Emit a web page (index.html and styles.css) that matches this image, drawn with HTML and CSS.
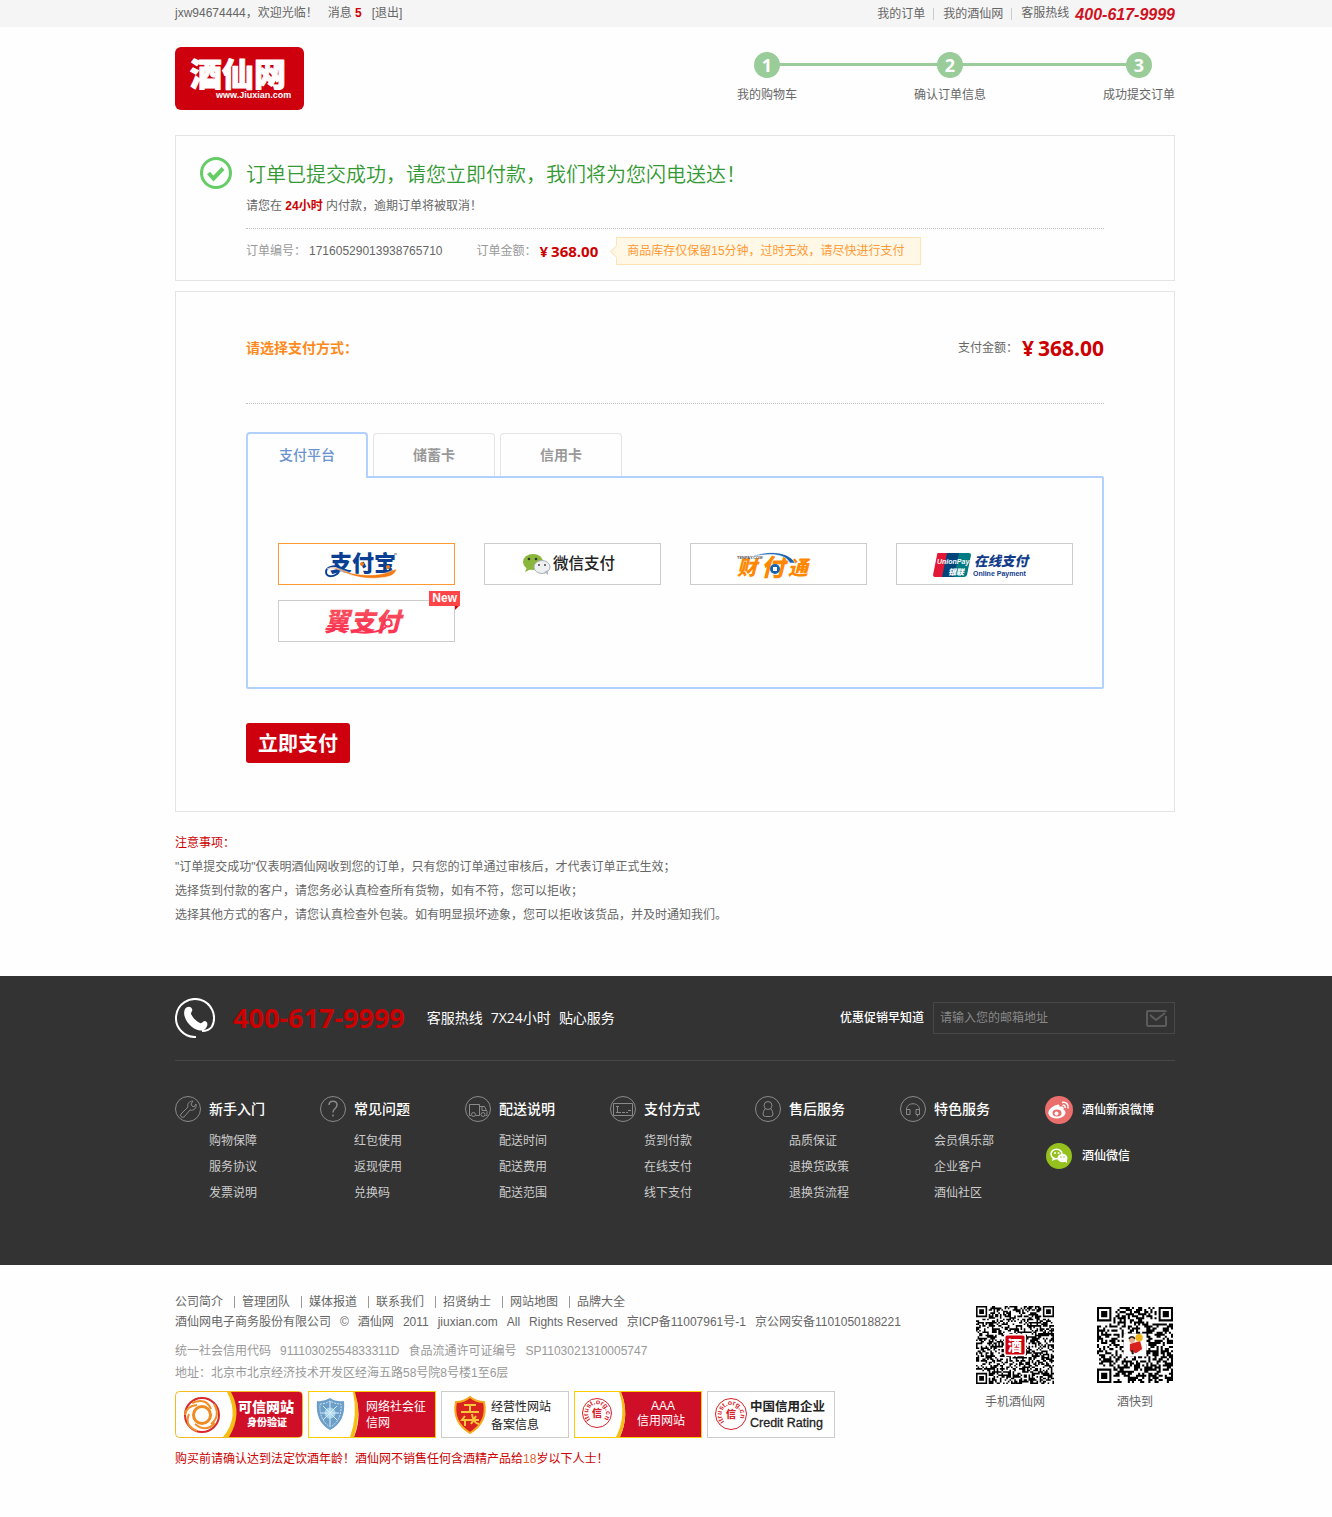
FILE: index.html
```html
<!DOCTYPE html>
<html lang="zh-CN">
<head>
<meta charset="utf-8">
<meta name="viewport" content="width=device-width, initial-scale=1">
<title>酒仙网 - 订单支付</title>
<link rel="stylesheet" href="styles.css">
</head>
<body>
<div class="band topbar">
  <div class="wrap topbar-row">
    <div class="topbar-user">
      <span>jxw94674444，欢迎光临！</span>
      <a href="#">消息 <b class="red">5</b></a>
      <a href="#">[退出]</a>
    </div>
    <nav class="topbar-nav">
      <a href="#">我的订单</a>
      <a href="#">我的酒仙网</a>
      <span>客服热线 <strong class="hotline">400-617-9999</strong></span>
    </nav>
  </div>
</div>

<header class="band">
  <div class="wrap header-row">
    <a href="#" class="logo" aria-label="酒仙网">
      <svg width="129" height="63" viewBox="0 0 129 63">
        <rect width="129" height="63" rx="6" fill="#cf000e"/>
        <g fill="#fff" stroke="#fff" stroke-linejoin="round">
          <text x="15" y="39" class="cjk-logo" font-size="32" stroke-width="1">酒仙网</text>
          <text x="41" y="51" class="latin-logo" font-size="9" stroke="none">www.Jiuxian.com</text>
        </g>
      </svg>
    </a>
    <ol class="steps">
      <li><b>1</b><span>我的购物车</span></li>
      <li><b>2</b><span>确认订单信息</span></li>
      <li><b>3</b><span>成功提交订单</span></li>
    </ol>
  </div>
</header>

<main class="band">
  <div class="wrap">
    <section class="box result">
      <svg width="32" height="32" viewBox="0 0 32 32" fill="none" stroke="#66cc66">
        <circle cx="16" cy="16" r="14.5" stroke-width="3"/>
        <path d="M8.500 16l5 5.500 9.500-10" stroke-width="4"/>
      </svg>
      <div class="result-body">
        <h1>订单已提交成功，请您立即付款，我们将为您闪电送达！</h1>
        <p class="deadline">请您在 <b class="red">24小时</b> 内付款，逾期订单将被取消！</p>
        <div class="order">
          <span class="order-no">订单编号： <em>17160529013938765710</em></span>
          <span>订单金额： <strong class="price"><i>¥</i>368.00</strong></span>
          <span class="tip">商品库存仅保留15分钟，过时无效，请尽快进行支付</span>
        </div>
      </div>
    </section>

    <form class="box pay">
      <div class="pay-head">
        <h2>请选择支付方式：</h2>
        <p>支付金额： <strong class="price price-big"><i>¥</i>368.00</strong></p>
      </div>
      <div class="tabs" role="tablist">
        <button type="button" role="tab" class="tab active" aria-selected="true">支付平台</button>
        <button type="button" role="tab" class="tab" aria-selected="false">储蓄卡</button>
        <button type="button" role="tab" class="tab" aria-selected="false">信用卡</button>
      </div>
      <div class="panel" role="tabpanel">
        <label class="option">
          <input type="radio" name="pay" aria-label="支付宝" checked>
          <svg width="175" height="40" viewBox="0 0 175 40">
            <text x="51" y="27" class="cjk-logo" font-size="22" fill="#0a3f93">支付宝</text>
            <path d="M60 23c-5-2-13 0-13 5 0 6 9 5 13 0" fill="none" stroke="#0a3f93" stroke-width="2"/>
            <path d="M48 25c8-5 16 3 29 5 14 2 28 1 37-4l4-1c-3 7-8 8-18 9-13 1-24-1-33-5-8-4-14-6-19-4z" fill="#f47b13" stroke="#fff" stroke-width=".5"/>
            <circle cx="83" cy="20" r="2" fill="#f47b13"/><circle cx="109" cy="23" r="2" fill="#f47b13"/>
            <path d="M115 10h3" stroke="#667"/>
          </svg>
        </label>
        <label class="option">
          <input type="radio" name="pay" aria-label="微信支付">
          <svg width="175" height="40" viewBox="0 0 175 40">
            <ellipse cx="48" cy="18" rx="10" ry="8" fill="#8bb63c"/><path d="M42 23l-2 5 6-3z" fill="#8bb63c"/>
            <circle cx="44" cy="15" r="1.300" fill="#333"/><circle cx="51" cy="15" r="1.300" fill="#333"/>
            <ellipse cx="57" cy="23" rx="8" ry="6.500" fill="#eef0f2" stroke="#a9b0b5"/><path d="M59 28l4 3v-5z" fill="#b6bdc2"/>
            <circle cx="54" cy="21" r="1" fill="#444"/><circle cx="60" cy="21" r="1" fill="#444"/>
            <text x="68" y="25" class="cjk" font-size="15.500" font-weight="500" fill="#222">微信支付</text>
          </svg>
        </label>
        <label class="option">
          <input type="radio" name="pay" aria-label="财付通">
          <svg width="175" height="40" viewBox="0 0 175 40">
            <text x="46" y="31" class="cjk-logo slant" font-size="20" fill="#f80">财</text>
            <text x="70" y="32" class="cjk-logo slant" font-size="24" fill="#f80">付</text>
            <text x="97" y="31" class="cjk-logo slant" font-size="20" fill="#f80">通</text>
            <path d="M60 13C76 6 98 7 104 19l-5 0C94 9 77 9 60 13z" fill="#1763b0" stroke="#fff" stroke-width=".5"/>
            <circle cx="84" cy="25" r="5" fill="#1763b0"/><rect x="82" y="23" width="4" height="4" fill="#fff"/>
            <text x="46" y="15" class="latin-logo" font-size="4" fill="#555">TENPAY.COM</text>
          </svg>
        </label>
        <label class="option">
          <input type="radio" name="pay" aria-label="银联在线支付">
          <svg width="175" height="40" viewBox="0 0 175 40">
            <path d="M41 9h11l-5 24H38q-2 0-2-2l4-20q0-2 1-2z" fill="#e21836"/>
            <path d="M50 9h13l-5 24H45z" fill="#00447c"/>
            <path d="M62 9h10q2 0 2 2l-4 20q-1 2-3 2H57z" fill="#007b84"/>
            <text x="40" y="20" class="latin-logo slant" font-size="7" fill="#fff">UnionPay</text>
            <text x="51" y="31" class="cjk-logo slant" font-size="8" fill="#fff">银联</text>
            <text x="77" y="22" class="cjk-logo slant" font-size="13.500" fill="#123c88">在线支付</text>
            <text x="76" y="32" class="latin-logo" font-size="7" fill="#123c88">Online Payment</text>
          </svg>
        </label>
        <label class="option">
          <input type="radio" name="pay" aria-label="翼支付">
          <svg width="175" height="40" viewBox="0 0 175 40">
            <defs><linearGradient id="wing" x2="0" y2="1"><stop stop-color="#f75a5f"/><stop offset="1" stop-color="#fc2c50"/></linearGradient></defs>
            <text x="45" y="30" class="cjk-logo slant" font-size="25.500" fill="url(#wing)">翼支付</text>
            <path d="M74 30c10 3 26 2 33-4" fill="none" stroke="#fc3453" stroke-width="2"/>
            <circle cx="109" cy="22" r="3.500" fill="#fff" stroke="#fc3453" stroke-width="2"/>
          </svg>
          <span class="new">New</span>
        </label>
      </div>
      <button type="submit" class="submit">立即支付</button>
    </form>

    <section class="notes">
      <h3>注意事项：</h3>
      <p>"订单提交成功"仅表明酒仙网收到您的订单，只有您的订单通过审核后，才代表订单正式生效；</p>
      <p>选择货到付款的客户，请您务必认真检查所有货物，如有不符，您可以拒收；</p>
      <p>选择其他方式的客户，请您认真检查外包装。如有明显损坏迹象，您可以拒收该货品，并及时通知我们。</p>
    </section>
  </div>
</main>

<footer>
  <div class="band dark">
    <div class="wrap">
      <div class="service">
        <svg width="40" height="40" viewBox="0 0 40 40">
          <path d="M21 39A19 19 0 1 1 37 28.500Q34 33 27 33" fill="none" stroke="#fff" stroke-width="2"/>
          <path d="M10 11c2-3 6-3 7 0 1 2-1 3-1 5 2 4 5 7 9 9 2 1 3-2 5-2 3 1 3 4 1 7-3 4-9 3-14-1-5-4-10-12-7-18z" fill="#fff"/>
        </svg>
        <strong class="service-phone">400-617-9999</strong>
        <p class="service-text"><span>客服热线</span><span>7X24小时</span><span>贴心服务</span></p>
        <label class="mail-label" for="mail">优惠促销早知道</label>
        <div class="mail-box">
          <input id="mail" type="email" placeholder="请输入您的邮箱地址">
          <button type="button" aria-label="订阅">
            <svg width="21" height="17" viewBox="0 0 21 17" fill="none" stroke="#5c5c5c" stroke-width="2"><path d="M20 6v9q0 1-1 1H2q-1 0-1-1V2q0-1 1-1h17q1 0 1 1"/><path d="M4 5l6 5 9-7"/></svg>
          </button>
        </div>
      </div>
      <div class="guide">
        <section>
          <svg width="26" height="26" viewBox="0 0 26 26" class="line-icon"><circle cx="13" cy="13" r="12.500"/><path d="M6 18l7-7c-1-3 1-6 5-6l-2 3 1 2 2 1 2-3c1 4-2 7-6 6l-6 7q-2 1-3-0.500t0-2.500z"/></svg>
          <h4>新手入门</h4>
          <ul><li><a href="#">购物保障</a></li><li><a href="#">服务协议</a></li><li><a href="#">发票说明</a></li></ul>
        </section>
        <section>
          <svg width="26" height="26" viewBox="0 0 26 26" class="line-icon"><circle cx="13" cy="13" r="12.500"/><path d="M9 9c0-5 8-5 8 0 0 4-4 3-4 7.500M13 18.500v2" stroke-width="1.500"/></svg>
          <h4>常见问题</h4>
          <ul><li><a href="#">红包使用</a></li><li><a href="#">返现使用</a></li><li><a href="#">兑换码</a></li></ul>
        </section>
        <section>
          <svg width="26" height="26" viewBox="0 0 26 26" class="line-icon"><circle cx="13" cy="13" r="12.500"/><path d="M6 19.500H4.500v-11h10v11h-4M14.500 10.500h5l2.500 5v4h-1.500M17 10.500v4h4"/><circle cx="8.500" cy="18.500" r="2"/><circle cx="18" cy="18.500" r="2"/></svg>
          <h4>配送说明</h4>
          <ul><li><a href="#">配送时间</a></li><li><a href="#">配送费用</a></li><li><a href="#">配送范围</a></li></ul>
        </section>
        <section>
          <svg width="26" height="26" viewBox="0 0 26 26" class="line-icon"><circle cx="13" cy="13" r="12.500"/><path d="M3.500 7.500h19v12h-19zM6 10.500h3M7.500 10v6M6 16.500h5M12 16.500h3M16 16.500h2M18 14.500h3"/></svg>
          <h4>支付方式</h4>
          <ul><li><a href="#">货到付款</a></li><li><a href="#">在线支付</a></li><li><a href="#">线下支付</a></li></ul>
        </section>
        <section>
          <svg width="26" height="26" viewBox="0 0 26 26" class="line-icon"><circle cx="13" cy="13" r="12.500"/><circle cx="13" cy="9.500" r="4"/><path d="M10 13q-2 2-2 5 0 2.500 2.500 2.500h5q2.500 0 2.500-2.500 0-3-2-5"/></svg>
          <h4>售后服务</h4>
          <ul><li><a href="#">品质保证</a></li><li><a href="#">退换货政策</a></li><li><a href="#">退换货流程</a></li></ul>
        </section>
        <section>
          <svg width="26" height="26" viewBox="0 0 26 26" class="line-icon"><circle cx="13" cy="13" r="12.500"/><path d="M6.500 14.500c-1-9 14-9 13 0M6.500 13.500h3.500v5H6.500zM16 13.500h3.500v5H16zM17.500 18.500v2"/></svg>
          <h4>特色服务</h4>
          <ul><li><a href="#">会员俱乐部</a></li><li><a href="#">企业客户</a></li><li><a href="#">酒仙社区</a></li></ul>
        </section>
        <div class="social">
          <a href="#">
            <svg width="28" height="28" viewBox="0 0 28 28"><circle cx="14" cy="14" r="14" fill="#ea6f6c"/><path d="M12 9c2-1 3 0 2.500 2 3-1 5 0 4 2.500 5 3 0 9-7 9S1 17 5 13c2-2 5-4 7-4z" fill="#fff"/><ellipse cx="12" cy="17" rx="4.500" ry="3.500" fill="#ea6f6c"/><circle cx="11.500" cy="17.500" r="2" fill="#fff"/><path d="M17 6.500c4-1 7 2 6 6M17.500 9.500c2-.5 3 .5 2.500 2.500" fill="none" stroke="#fff" stroke-width="1.500"/></svg>
            <span>酒仙新浪微博</span>
          </a>
          <a href="#">
            <svg width="28" height="28" viewBox="0 0 28 28"><circle cx="14" cy="14" r="13" fill="#95c11f"/><ellipse cx="11.500" cy="12" rx="5.500" ry="4.700" fill="none" stroke="#fff" stroke-width="1.500"/><path d="M8 15l-1 4 4-2z" fill="#fff"/><circle cx="10" cy="11" r="1" fill="#fff"/><circle cx="13.500" cy="11" r="1" fill="#fff"/><ellipse cx="17.500" cy="16" rx="5" ry="4.300" fill="#fff"/><path d="M19 19l3 2v-4z" fill="#fff"/><circle cx="16" cy="15" r=".7" fill="#95c11f"/><circle cx="19" cy="15" r=".7" fill="#95c11f"/></svg>
            <span>酒仙微信</span>
          </a>
        </div>
      </div>
    </div>
  </div>

  <div class="band">
    <div class="wrap legal">
      <div class="legal-main">
        <nav class="legal-nav">
          <a href="#">公司简介</a><a href="#">管理团队</a><a href="#">媒体报道</a><a href="#">联系我们</a><a href="#">招贤纳士</a><a href="#">网站地图</a><a href="#">品牌大全</a>
        </nav>
        <p class="copyright"><span>酒仙网电子商务股份有限公司</span><span>©</span><span>酒仙网</span><span>2011</span><span>jiuxian.com</span><span>All</span><span>Rights Reserved</span><span>京ICP备11007961号-1</span><span>京公网安备1101050188221</span></p>
        <div class="license">
          <p><span>统一社会信用代码</span><span>91110302554833311D</span><span>食品流通许可证编号</span><span>SP1103021310005747</span></p>
          <p>地址：北京市北京经济技术开发区经海五路58号院8号楼1至6层</p>
        </div>
        <div class="seals">
          <a href="#"><svg width="128" height="47" viewBox="0 0 128 47">
            <rect x=".5" y=".5" width="127" height="46" rx="4" fill="#fff" stroke="#f5b921"/>
            <path d="M54 1h70q3 0 3 3v39q0 3-3 3H50q18-20 4-45z" fill="#cf0e27"/><path d="M52 1h4q12 22-2 45h-6q17-20 4-45z" fill="#f6bd14"/>
            <g fill="none"><circle cx="27" cy="24" r="17" stroke="#d9292b" stroke-width="2"/><circle cx="27" cy="24" r="8.500" stroke="#ef8b21" stroke-width="3"/><path d="M17 12q14-6 19 6M39 13q7 12-3 20M40 32q-9 10-20 1M22 40q-13-5-8-17M10 24q1-9 12-10" stroke="#f0902a" stroke-width="2"/></g>
            <text x="63" y="21" class="cjk-logo" font-size="14" fill="#fff">可信网站</text><text x="72" y="35" class="cjk-logo" font-size="10" fill="#fff">身份验证</text></svg></a>
          <a href="#"><svg width="128" height="47" viewBox="0 0 128 47">
            <rect x=".5" y=".5" width="127" height="46" fill="#fff" stroke="#fc0"/><path d="M46 1h81v45H46q9-22 0-45z" fill="#cf0e27"/><path d="M45 1h2q7 22-1 45h-4q8-22 3-45z" fill="#f6bd14"/>
            <path d="M9 10q7 1 13-3 6 4 14 3 2 21-14 29Q7 31 9 10z" fill="#6b9fc9"/><path d="M12 13q5 0 10-3 5 3 11 3 1 17-11 23Q11 29 12 13z" fill="none" stroke="#cfe2f0" stroke-dasharray="2 1"/><circle cx="22" cy="22" r="5.500" fill="#a5d3ee"/><path d="M22 10v25M13 22h18M15 15l14 14M29 15L15 29" stroke="#dcecf6"/>
            <text x="58" y="20" class="cjk" font-size="12" fill="#fff">网络社会征</text><text x="58" y="36" class="cjk" font-size="12" fill="#fff">信网</text></svg></a>
          <a href="#"><svg width="128" height="47" viewBox="0 0 128 47">
            <rect x=".5" y=".5" width="127" height="46" fill="#fff" stroke="#ccc"/>
            <path d="M29 6q6 5 14 5 4 20-14 31Q11 31 15 11q8 0 14-5z" fill="#d8231f" stroke="#f7a81b" stroke-width="2"/><path d="M23 14h12M29 14v7M20 21h18M24 25l-3 4h17M31 23q1 9 7 10M35 25l-5 8M24 29v6" fill="none" stroke="#fbc63a" stroke-width="2"/>
            <text x="50" y="20" class="cjk" font-size="12" fill="#222">经营性网站</text><text x="50" y="38" class="cjk" font-size="12" fill="#222">备案信息</text></svg></a>
          <a href="#"><svg width="128" height="47" viewBox="0 0 128 47">
            <rect x=".5" y=".5" width="127" height="46" fill="#fff" stroke="#fc0"/><path d="M47 1h80v45H46q10-22 1-45z" fill="#cf0e27"/><path d="M45 1h2q9 22-1 45h-4q11-22 3-45z" fill="#f6bd14"/>
            <circle cx="23" cy="22" r="14.500" fill="none" stroke="#d8232a"/><path id="ring" d="M16.500 28.500A9 9 0 1 1 29.500 28.500" fill="none"/><text class="latin-logo" font-size="7" fill="#d8232a"><textPath href="#ring">itrust.org.cn</textPath></text><text x="18" y="26" class="cjk-logo" font-size="10" fill="#d8232a">信</text>
            <text x="77" y="19" class="latin" font-size="12" fill="#fff">AAA</text><text x="63" y="34" class="cjk" font-size="12" fill="#fff">信用网站</text></svg></a>
          <a href="#"><svg width="128" height="47" viewBox="0 0 128 47">
            <rect x=".5" y=".5" width="127" height="46" fill="#fff" stroke="#ccc"/>
            <circle cx="24" cy="23" r="15.500" fill="none" stroke="#d8232a"/><path id="ring2" d="M17.500 30.500A9.500 9.500 0 1 1 30.500 30.500" fill="none"/><text class="latin-logo" font-size="7" fill="#d8232a"><textPath href="#ring2">itrust.org.cn</textPath></text><text x="19" y="27" class="cjk-logo" font-size="10" fill="#d8232a">信</text>
            <text x="43" y="20" class="cjk" font-size="12.500" font-weight="700" fill="#222">中国信用企业</text><text x="43" y="36" class="latin" font-size="12.500" stroke="#222" stroke-width=".3" fill="#222">Credit Rating</text></svg></a>
        </div>
        <p class="warning">购买前请确认达到法定饮酒年龄！酒仙网不销售任何含酒精产品给<span>18</span>岁以下人士！</p>
      </div>
      <div class="codes">
        <figure>
          <svg class="qr" data-size="49" data-seed="7" viewBox="0 0 49 49" width="78" height="78"><path/><rect x="18" y="18" width="13" height="13" rx="1.500" fill="#cf000e" stroke="#fff"/><text x="20" y="28" class="cjk-logo" font-size="9" fill="#fff">酒</text></svg>
          <figcaption>手机酒仙网</figcaption>
        </figure>
        <figure>
          <svg class="qr" data-size="37" data-seed="23" viewBox="0 0 37 37" width="76" height="78"><path/><rect x="13" y="13" width="11" height="11" fill="#fff"/><path d="M16 18l5-1.500 1 4-3 2-3-1z" fill="#d8201d"/><circle cx="17" cy="16" r="1.500" fill="#e9b08c"/><path d="M15.500 15.500q1.500-2 3 0" stroke="#222" stroke-width=".8" fill="none"/><circle cx="20.500" cy="15" r="1.800" fill="#f2b51c"/><path d="M17 21l.5 2" stroke="#222"/></svg>
          <figcaption>酒快到</figcaption>
        </figure>
      </div>
    </div>
  </div>
</footer>
<script src="qr.js"></script>
</body>
</html>
```
FILE: styles.css
```css
* { box-sizing: border-box; }
body, h1, h2, h3, h4, p, ul, ol, figure { margin: 0; padding: 0; }
ul, ol { list-style: none; }
body {
  background: #fefefe;
  color: #666;
  font: 12px/18px "Liberation Sans", "Noto Sans CJK SC", sans-serif;
}
a { color: inherit; text-decoration: none; }
svg { display: block; flex: none; }
button, input { font: inherit; }
em, i { font-style: normal; }
.band { padding-left: 18px; }
.wrap { max-width: 1000px; margin: 0 auto; }
.red { color: #c00; }
.cjk { font-family: "Noto Sans CJK SC", sans-serif; }
.cjk-logo { font-family: "Noto Sans CJK SC", sans-serif; font-weight: 900; }
.latin { font-family: "Liberation Sans", sans-serif; }
.latin-logo { font-family: "Liberation Sans", sans-serif; font-weight: 700; }
.slant { font-style: italic; }

/* top bar */
.topbar { background: #f5f5f5; }
.topbar-row { display: flex; justify-content: space-between; line-height: 27px; }
.topbar-user { display: flex; gap: 10px; }
.topbar-nav { display: flex; align-items: center; }
.topbar-nav a { line-height: 12px; padding-right: 8px; margin-right: 9px; border-right: 1px solid #ccc; }
.topbar-nav > span { display: flex; align-items: center; gap: 6px; }
.hotline { font-size: 16px; font-style: italic; color: #cf1322; padding-top: 3px; line-height: 24px; }

/* header */
.header-row { display: flex; justify-content: space-between; align-items: flex-start; padding: 20px 0 25px; }
.steps { display: flex; justify-content: space-between; width: 438px; padding-top: 5px; position: relative; }
.steps::before { content: ""; position: absolute; left: 30px; right: 36px; top: 16px; height: 3px; background: #9c9; }
.steps li { display: flex; flex-direction: column; align-items: center; gap: 8px; position: relative; }
.steps b {
  width: 26px; height: 26px; border-radius: 50%; background: #9c9; color: #fff;
  font: 700 18px/26px "Open Sans", sans-serif; text-align: center;
}

/* order result */
.box { border: 1px solid #e4e4e4; }
.result { display: flex; gap: 14px; padding: 21px 70px 15px 24px; }
.result-body { flex: 1; padding-top: 2px; }
h1 { font: 350 20px/30px "Noto Sans CJK SC", sans-serif; color: #393; }
.deadline { margin-top: 8px; padding-bottom: 13px; border-bottom: 1px dotted #bbb; }
.order { display: flex; align-items: center; margin-top: 8px; color: #999; }
.order > span { display: flex; align-items: center; gap: 3px; }
.order .order-no { margin-right: 34px; }
.order em { color: #666; }
.price { font: 700 15px/20px "Open Sans", "Noto Sans CJK SC", sans-serif; color: #c00; }
.price i { margin-right: 3px; }
.order .tip {
  position: relative; margin-left: 18px; padding: 0 15px 0 10px;
  border: 1px solid #ffe3b5; background: #fff8e6; color: #f93; line-height: 26px;
}
.tip::before {
  content: ""; position: absolute; left: -5px; top: 9px; width: 8px; height: 8px;
  border: 1px solid #ffe3b5; border-width: 0 0 1px 1px; background: #fff8e6; transform: rotate(45deg);
}

/* payment form */
.pay { margin-top: 10px; padding: 41px 70px 48px; }
.pay-head { display: flex; justify-content: space-between; padding-bottom: 40px; border-bottom: 1px dotted #bbb; line-height: 30px; }
.pay-head h2 { font: 700 14px/28px "Noto Sans CJK SC", sans-serif; color: #ff8a1c; }
.pay-head p { display: flex; align-items: center; gap: 4px; }
.price-big { font-size: 21px; line-height: 30px; }
.price-big i { margin-right: 4px; }
.tabs { display: flex; align-items: flex-end; gap: 5px; margin-top: 28px; }
.tab {
  width: 122px; height: 43px; padding: 0 0 2px; border: 1px solid #e4e4e4; border-bottom: 0; border-radius: 4px 4px 0 0;
  background: #fefefe; color: #999; font: 700 14px/20px "Noto Sans CJK SC", sans-serif;
}
.tab.active { position: relative; height: 46px; margin-bottom: -2px; padding-bottom: 4px; border: 2px solid #b2d1ff; border-bottom: 0; color: #6b93cd; font-weight: 500; }
.panel {
  display: grid; grid-template-columns: repeat(4, 1fr); gap: 15px 29px; padding: 65px 29px 45px 30px;
  border: 2px solid #b2d1ff; border-radius: 0 2px 2px 2px;
}
.option { position: relative; display: flex; justify-content: center; border: 1px solid #ccc; background: #fff; cursor: pointer; }
.option:has(:checked) { border-color: #f93; }
.option input { position: absolute; inset: 0; margin: 0; width: 100%; height: 100%; opacity: 0; }
.new { position: absolute; top: -10px; right: -6px; padding: 0 3px; background: #ff4548; color: #fff; font-weight: 700; line-height: 15px; }
.new::after { content: ""; position: absolute; right: 1px; top: 15px; border: solid transparent; border-width: 0 4px 4px 0; border-left: 0; border-top: 4px solid #d00; }
.submit {
  display: block; margin-top: 34px; padding: 0 12px; height: 40px; border: 0; border-radius: 3px; background: #cf000e; color: #fff;
  font: 700 20px/40px "Noto Sans CJK SC", sans-serif;
}
.notes { margin: 19px 0 49px; line-height: 24px; }
.notes h3 { font-size: 12px; font-weight: 400; color: #c00; }

/* dark footer */
.dark { background: #333; color: #ccc; padding-top: 22px; padding-bottom: 59px; }
.service { display: flex; align-items: center; padding-bottom: 22px; border-bottom: 1px solid #484848; color: #fff; }
.service-phone { margin-left: 18px; font: 700 27px/40px "Open Sans", sans-serif; color: #c00; }
.service-text { display: flex; gap: 8px; margin-left: 22px; font: 14px/20px "Open Sans", "Noto Sans CJK SC", sans-serif; }
.mail-label { margin-left: auto; font-weight: 500; }
.mail-box { display: flex; align-items: center; width: 242px; height: 32px; margin-left: 9px; padding: 0 7px 0 6px; border: 1px solid #484848; }
.mail-box input { flex: 1; min-width: 0; padding: 0; border: 0; outline: 0; background: none; color: #ccc; }
.mail-box input::placeholder { color: #888; }
.mail-box button { padding: 0; border: 0; background: none; }
.guide { display: grid; grid-template-columns: repeat(6, 145fr) 130fr; padding-top: 35px; }
.guide section { display: grid; grid-template-columns: 26px 1fr; column-gap: 8px; align-content: start; }
.guide h4 { font: 500 14px/24px "Noto Sans CJK SC", sans-serif; color: #fff; }
.guide ul { grid-column: 2; margin-top: 6px; line-height: 26px; }
.line-icon { fill: none; stroke: #8a8a8a; }
.social { display: flex; flex-direction: column; gap: 18px; color: #fff; font-weight: 500; }
.social a { display: flex; align-items: center; gap: 9px; }

/* legal */
.legal { display: flex; justify-content: space-between; align-items: flex-start; padding: 27px 0 48px; line-height: 20px; }
.legal-nav { display: flex; align-items: center; height: 20px; }
.legal-nav a { line-height: 12px; }
.legal-nav a + a { margin-left: 11px; padding-left: 7px; border-left: 1px solid #999; }
.copyright { display: flex; gap: 9px; }
.license { margin: 8px 0 7px; color: #999; line-height: 22px; }
.license p { display: flex; gap: 9px; }
.seals { display: flex; gap: 5px; }
.warning { margin-top: 11px; color: #c00; }
.warning span { color: #d63; }
.codes { display: flex; gap: 43px; padding: 14px 2px 0 0; text-align: center; }
.codes figcaption { margin-top: 8px; }
```
FILE: qr.js
```js
// Fills each .qr svg with finder squares and a seeded module pattern.
document.querySelectorAll('.qr').forEach(function (svg) {
  var n = +svg.dataset.size, seed = +svg.dataset.seed, d = '';
  function rand() { seed = (seed * 16807) % 2147483647; return seed / 2147483647; }
  for (var i = 0; i < 20; i++) rand();
  function finder(x, y) {
    if (x < 0 || y < 0 || x > 6 || y > 6) return false;
    var r = Math.max(Math.abs(x - 3), Math.abs(y - 3));
    return r !== 2;
  }
  for (var y = 0; y < n; y++) {
    for (var x = 0; x < n; x++) {
      var corner = (x < 8 && y < 8) || (x > n - 9 && y < 8) || (x < 8 && y > n - 9);
      var on = corner ? finder(x, y) || finder(x - n + 7, y) || finder(x, y - n + 7) : rand() < 0.52;
      if (on) d += 'M' + x + ' ' + y + 'h1v1h-1z';
    }
  }
  svg.querySelector('path').setAttribute('d', d);
});
```
